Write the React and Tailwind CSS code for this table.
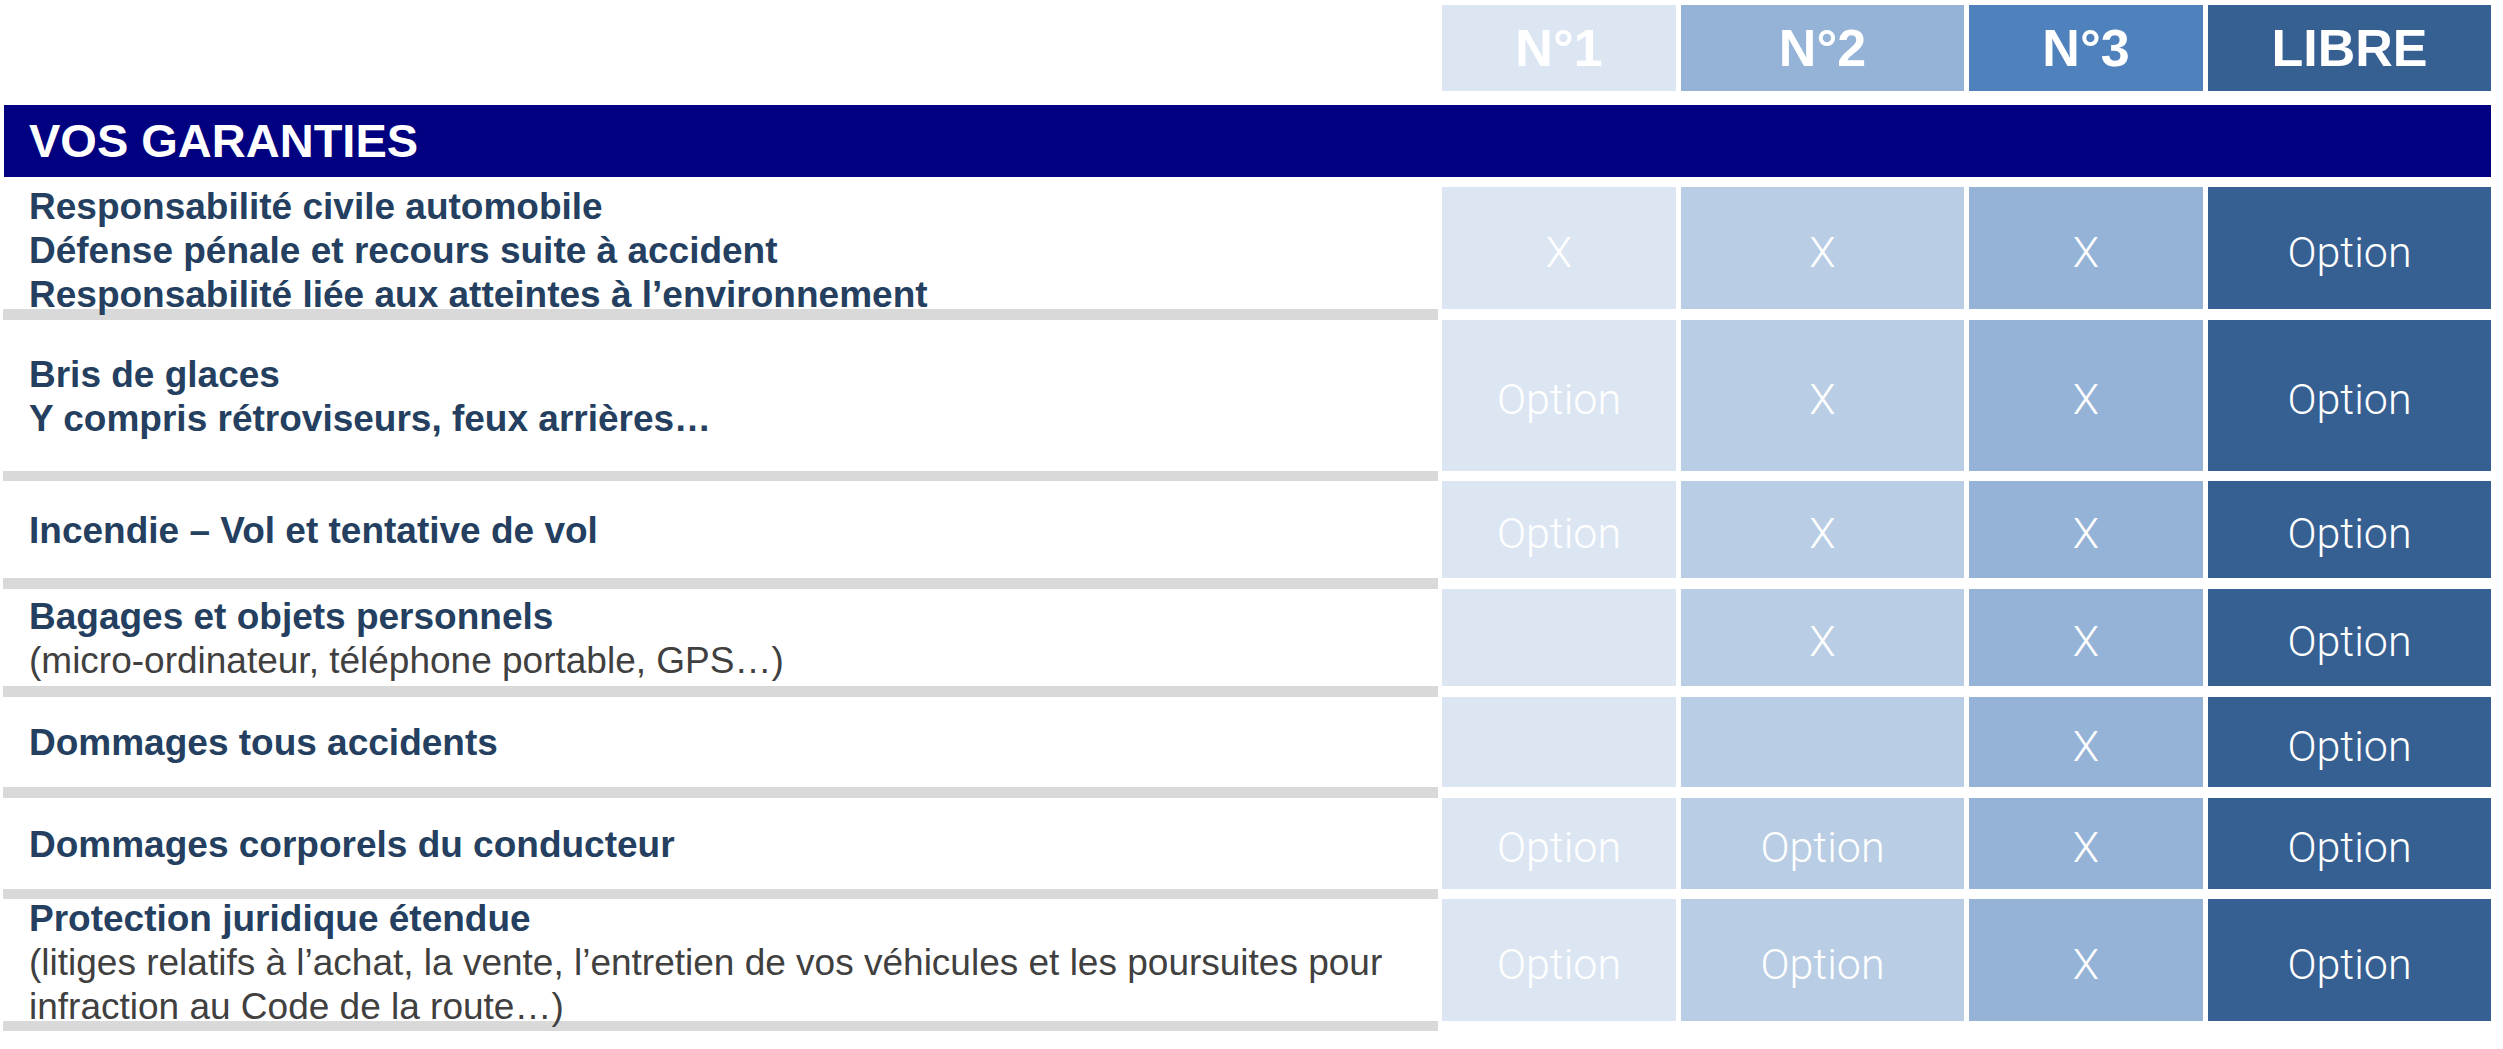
import React from "react";

const cols = "grid grid-cols-[1437px_234px_283px_234px_283px] gap-x-[5px]";

const rows = [
    {
        h: "grid-rows-[122px]",
        sep: "h-[11px]",
        lines: [
            { b: true, t: "Responsabilité civile automobile" },
            { b: true, t: "Défense pénale et recours suite à accident" },
            { b: true, t: "Responsabilité liée aux atteintes à l’environnement" },
        ],
        v: ["X", "X", "X", "Option"],
    },
    {
        h: "grid-rows-[151px]",
        sep: "h-[10px]",
        lines: [
            { b: true, t: "Bris de glaces" },
            { b: true, t: "Y compris rétroviseurs, feux arrières…" },
        ],
        v: ["Option", "X", "X", "Option"],
    },
    {
        h: "grid-rows-[97px]",
        sep: "h-[11px]",
        lines: [{ b: true, t: "Incendie – Vol et tentative de vol" }],
        v: ["Option", "X", "X", "Option"],
    },
    {
        h: "grid-rows-[97px]",
        sep: "h-[11px]",
        lines: [
            { b: true, t: "Bagages et objets personnels" },
            { b: false, t: "(micro-ordinateur, téléphone portable, GPS…)" },
        ],
        v: ["", "X", "X", "Option"],
    },
    {
        h: "grid-rows-[90px]",
        sep: "h-[11px]",
        lines: [{ b: true, t: "Dommages tous accidents" }],
        v: ["", "", "X", "Option"],
    },
    {
        h: "grid-rows-[91px]",
        sep: "h-[10px]",
        lines: [{ b: true, t: "Dommages corporels du conducteur" }],
        v: ["Option", "Option", "X", "Option"],
    },
    {
        h: "grid-rows-[122px]",
        sep: "h-[10px]",
        lines: [
            { b: true, t: "Protection juridique étendue" },
            {
                b: false,
                j: true,
                t: "(litiges relatifs à l’achat, la vente, l’entretien de vos véhicules et les poursuites pour",
            },
            { b: false, t: "infraction au Code de la route…)" },
        ],
        v: ["Option", "Option", "X", "Option"],
    },
];

const cellBg = ["bg-[#dce6f2]", "bg-[#b9cde5]", "bg-[#95b3d7]", "bg-[#376092]"];
const headBg = ["bg-[#dce6f2]", "bg-[#95b3d7]", "bg-[#4f81bd]", "bg-[#376092]"];
const heads = ["N°1", "N°2", "N°3", "LIBRE"];

const App = () => {
    return (
        <div className="h-[1049px] w-[2503px] bg-white pt-[5px] font-['Liberation_Sans',Arial,sans-serif]">
            <div className={cols}>
                <div />
                {heads.map((h, i) => (
                    <div
                        key={h}
                        className={`flex h-[86px] items-center justify-center text-[52px] font-bold text-white ${headBg[i]}`}
                    >
                        {h}
                    </div>
                ))}
            </div>

            <div className="mt-[14px] ml-[4px] flex h-[72px] w-[2487px] items-center bg-[#000080] pl-[25px] text-[47px] font-bold text-white">
                VOS GARANTIES
            </div>

            <div className="mt-[10px]">
                {rows.map((r, ri) => (
                    <div key={ri}>
                        <div className={`${cols} ${r.h}`}>
                            <div
                                className={`flex min-h-0 flex-col justify-center pl-[29px] text-[37px] leading-[44px] ${
                                    r.lines.length > 2 ? "pt-[5px]" : "pt-[2px]"
                                }`}
                            >
                                {r.lines.map((l, li) => (
                                    <div
                                        key={li}
                                        className={`${
                                            l.b ? "font-bold text-[#243f60]" : "text-[#404040]"
                                        } ${l.j ? "w-[1353px] text-justify [text-align-last:justify]" : ""} shrink-0 whitespace-nowrap`}
                                    >
                                        {l.t}
                                    </div>
                                ))}
                            </div>
                            {r.v.map((v, vi) => (
                                <div
                                    key={vi}
                                    className={`flex items-center justify-center pt-[8px] font-['Roboto',sans-serif] text-[43px] font-light text-white ${cellBg[vi]}`}
                                >
                                    {v}
                                </div>
                            ))}
                        </div>
                        <div className={`ml-[3px] w-[1435px] bg-[#d9d9d9] ${r.sep}`} />
                    </div>
                ))}
            </div>
        </div>
    );
};

export default App;
